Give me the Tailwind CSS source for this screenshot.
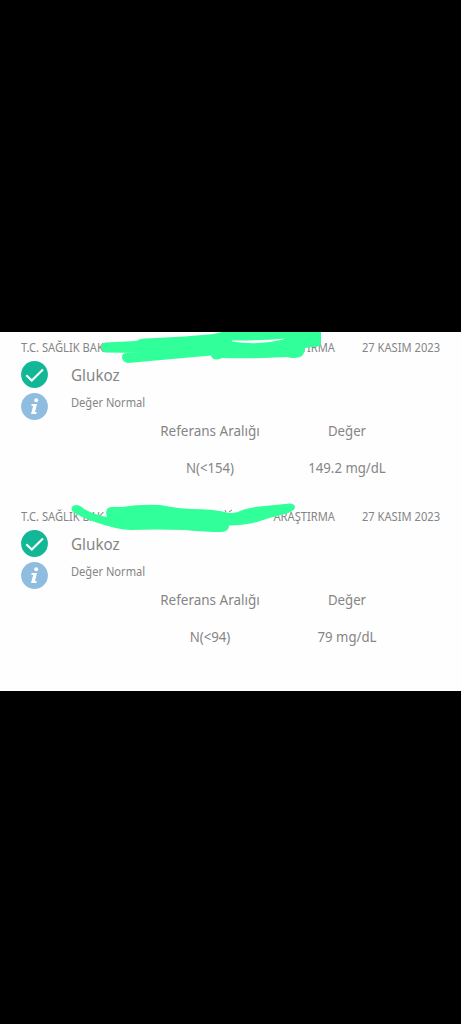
<!DOCTYPE html>
<html lang="tr">
<head>
<meta charset="utf-8">
<title>Tahliller</title>
<script src="https://cdn.jsdelivr.net/npm/@tailwindcss/browser@4"></script>
</head>
<body class="bg-black">
<main class="w-[461px] h-[1024px] pt-[332px] overflow-hidden font-['Noto_Sans',sans-serif] text-[#858585]">
  <div class="h-[359px] bg-[#fefefe]">
    <section class="relative h-[168px] pt-[8px] px-[21px]">
      <div class="flex h-4 items-center text-[12px] leading-4 whitespace-nowrap">
        <span class="w-[200px] origin-left scale-x-[.93]">T.C. SAĞLIK BAK</span>
        <span class="w-[114px] text-right origin-right scale-x-[.93]">ARAŞTIRMA</span>
        <span class="ml-auto origin-right scale-x-[.93]">27 KASIM 2023</span>
      </div>
      <div class="flex h-[27px] mt-[5px] items-center">
        <svg class="w-[27px] h-[27px]" viewBox="0 0 27 27"><circle cx="13.5" cy="13.5" r="13.4" fill="#12b896"/><path d="M5.3 14.3L10.8 19.6L22 8.4" fill="none" stroke="#fff" stroke-width="2.1"/></svg>
        <span class="ml-[23px] text-[17px] leading-6 origin-left scale-x-[.895]">Glukoz</span>
      </div>
      <div class="flex h-[27px] mt-[5px]">
        <svg class="w-[27px] h-[27px]" viewBox="0 0 27 27"><circle cx="13.5" cy="13.5" r="13.4" fill="#8fbde0"/><circle cx="15.2" cy="7.3" r="2" fill="#fff"/><path d="M10.7 11H16L14 19H15.7L15.3 21H10L12.2 13H10.3Z" fill="#fff"/></svg>
        <span class="ml-[23px] mt-[2px] text-[12px] leading-4 origin-left scale-x-[.925]">Değer Normal</span>
      </div>
      <div class="grid grid-cols-[138px_136px] ml-[120px] text-[14.5px] leading-5 gap-y-[17px] text-center whitespace-nowrap">
        <span class="scale-x-[.93]">Referans Aralığı</span><span class="scale-x-[.91]">Değer</span>
        <span class="scale-x-[.91]">N(&lt;154)</span><span class="scale-x-[.91]">149.2 mg/dL</span>
      </div>
      <svg class="absolute left-0 top-0 w-[461px] h-[40px]" viewBox="0 332 461 40"><path d="M105 342.500L136 341Q140 338 146 338.500L185 336.500L214 334L222 332H321V343Q321 346 317 346.500L305 348Q304 356 300 357Q293 359 287 357Q250 359 222 358Q213 362 211 355.500L150 361L128 363Q122 362 122 357Q122 353 127 353H143L105 352.500Q97 347 105 342.500Z" fill="#31ff99"/><path d="M232 340.500Q255 341 286 338.500Q260 346 232 341.500Z" fill="#fefefe"/></svg>
    </section>
    <section class="relative h-[168px] pt-[9px] px-[21px]">
      <div class="flex h-4 items-center text-[12px] leading-4 whitespace-nowrap">
        <span class="w-[200px] origin-left scale-x-[.93]">T.C. SAĞLIK BAK</span>
        <span class="w-[114px] text-right origin-right scale-x-[.93]">ARAŞTIRMA</span>
        <span class="ml-auto origin-right scale-x-[.93]">27 KASIM 2023</span>
      </div>
      <div class="flex h-[27px] mt-[5px] items-center">
        <svg class="w-[27px] h-[27px]" viewBox="0 0 27 27"><circle cx="13.5" cy="13.5" r="13.4" fill="#12b896"/><path d="M5.3 14.3L10.8 19.6L22 8.4" fill="none" stroke="#fff" stroke-width="2.1"/></svg>
        <span class="ml-[23px] text-[17px] leading-6 origin-left scale-x-[.895]">Glukoz</span>
      </div>
      <div class="flex h-[27px] mt-[5px]">
        <svg class="w-[27px] h-[27px]" viewBox="0 0 27 27"><circle cx="13.5" cy="13.5" r="13.4" fill="#8fbde0"/><circle cx="15.2" cy="7.3" r="2" fill="#fff"/><path d="M10.7 11H16L14 19H15.7L15.3 21H10L12.2 13H10.3Z" fill="#fff"/></svg>
        <span class="ml-[23px] mt-[2px] text-[12px] leading-4 origin-left scale-x-[.925]">Değer Normal</span>
      </div>
      <div class="grid grid-cols-[138px_136px] ml-[120px] text-[14.5px] leading-5 gap-y-[17px] text-center whitespace-nowrap">
        <span class="scale-x-[.93]">Referans Aralığı</span><span class="scale-x-[.91]">Değer</span>
        <span class="scale-x-[.91]">N(&lt;94)</span><span class="scale-x-[.91]">79 mg/dL</span>
      </div>
      <svg class="absolute left-0 top-0 w-[461px] h-[40px]" viewBox="0 500 461 40"><path d="M225 510L226 512M229 512L232 510" fill="none" stroke="#858585"/><path d="M76 505Q80 505 84 509Q95 515 107 517Q104 508 111 507H122Q140 504 160 505Q175 508 190 509Q215 509 229 513Q236 513 240 511Q250 507 265 506L290 503.500Q295 504 295 507Q295 511 285 514Q268 518 260 521Q248 525 229 525.500Q229 531 222 532Q205 532 185 530Q155 529 130 530Q115 529 95 522Q80 517 72 511Q70 506 76 505Z" fill="#31ff99"/></svg>
    </section>
  </div>
</main>
</body>
</html>
